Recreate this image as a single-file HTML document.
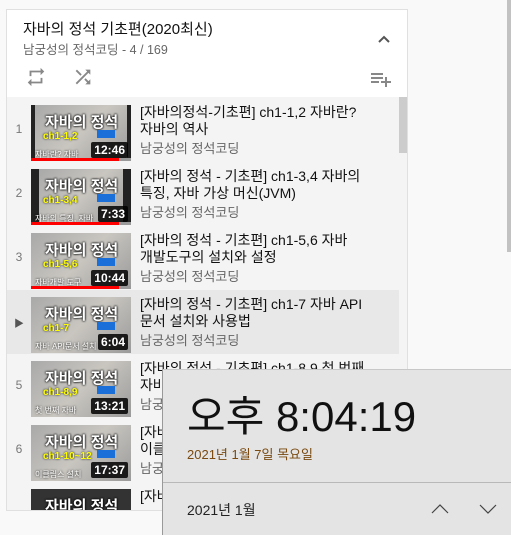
<!DOCTYPE html>
<html><head><meta charset="utf-8"><style>
*{margin:0;padding:0;box-sizing:border-box}
body{width:511px;height:535px;background:#f9f9f9;font-family:"Liberation Sans","Noto Sans CJK KR",sans-serif;position:relative;overflow:hidden}
#box{position:absolute;left:6px;top:9px;width:402px;height:502px;border:1px solid #e0e0e0;background:#f4f4f4;overflow:hidden}
#hdr{position:absolute;left:0;top:0;width:400px;height:87px;background:#fff}
.t1{position:absolute;left:16px;top:8px;font-size:15px;color:#111}
.t2{position:absolute;left:16px;top:29px;font-size:12.5px;color:#666}
.row{position:absolute;left:0;width:392px;height:64px}
.num{position:absolute;left:0;width:24px;text-align:center;top:24px;font-size:12px;color:#777}
.th{position:absolute;left:24px;top:7px;width:100px;height:56px;background:linear-gradient(135deg,#a9a9a9,#c9c6c0 50%,#9a9a9a);overflow:hidden}
.th .a{position:absolute;left:14px;top:6px;color:#fff;font-weight:bold;font-size:15px;text-shadow:0 0 2px #000,0 0 2px #000}
.th .b{position:absolute;left:12px;top:26px;color:#ff0;font-weight:bold;font-size:10px;text-shadow:0 0 2px #000}
.th .k{position:absolute;left:66px;top:25px;width:18px;height:8px;background:#1a6fd8}
.th .s{position:absolute;left:4px;top:44px;color:#fff;font-size:8px;text-shadow:0 0 2px #000}
.th .d{position:absolute;right:3px;bottom:3px;background:rgba(0,0,0,.85);color:#fff;font-weight:bold;font-size:12px;padding:1px 3px;border-radius:2px}
.th .p{position:absolute;left:0;bottom:0;height:3px;width:88px;background:#f00}
.th .p:after{content:"";position:absolute;left:88px;width:12px;height:3px;background:#999}
.ti{position:absolute;left:133px;top:6px;width:245px;font-size:14px;line-height:17px;color:#111;word-break:keep-all}
.ch{position:absolute;left:133px;top:40px;font-size:13px;color:#666}
#pop{position:absolute;left:162px;top:369px;width:349px;height:166px;background:#e4e4e4;border-left:1px solid #999;border-top:1px solid #c8c8c8}
</style></head><body>
<div style="position:absolute;right:0;top:0;width:4px;height:252px;background:#c2c2c2"></div>
<div id="box">
<div id="hdr">
<div class="t1">자바의 정석 기초편(2020최신)</div>
<div class="t2">남궁성의 정석코딩 - 4 / 169</div>
<svg style="position:absolute;left:370px;top:24px" width="14" height="10" viewBox="0 0 14 10"><path d="M2 8L7 3L12 8" stroke="#555" stroke-width="2" fill="none"/></svg>
<svg style="position:absolute;left:18px;top:56px" width="22" height="22" viewBox="0 0 24 24"><path fill="#888" d="M7 7h10v3l4-4-4-4v3H5v6h2V7zm10 10H7v-3l-4 4 4 4v-3h12v-6h-2v4z"/></svg>
<svg style="position:absolute;left:65px;top:56px" width="22" height="22" viewBox="0 0 24 24"><path fill="#888" d="M10.59 9.17L5.41 4 4 5.41l5.17 5.17 1.42-1.41zM14.5 4l2.04 2.04L4 18.59 5.41 20 17.96 7.46 20 9.5V4h-5.5zm.33 9.41l-1.41 1.41 3.13 3.13L14.5 20H20v-5.5l-2.04 2.04-3.13-3.13z"/></svg>
<svg style="position:absolute;left:362px;top:57px" width="24" height="24" viewBox="0 0 24 24"><path fill="#888" d="M14 10H2v2h12v-2zm0-4H2v2h12V6zm4 8v-4h-2v4h-4v2h4v4h2v-4h4v-2h-4zM2 16h8v-2H2v2z"/></svg>
</div>
<div style="position:absolute;left:392px;top:87px;width:8px;height:56px;background:#ccc"></div>

<div class="row" style="top:88px"><div class="num">1</div><div class="th" style="background:#222"><div style="position:absolute;left:0;right:0;top:0;bottom:0;margin:0 4px;background:linear-gradient(135deg,#a9a9a9,#c9c6c0 50%,#9a9a9a)"></div><div class="a">자바의 정석</div><div class="b">ch1-1,2</div><div class="k"></div><div class="s">자바란? 자바</div><div class="d">12:46</div><div class="p"></div></div><div class="ti">[자바의정석-기초편] ch1-1,2 자바란? 자바의 역사</div><div class="ch">남궁성의 정석코딩</div></div>
<div class="row" style="top:152px"><div class="num">2</div><div class="th" style="background:#222"><div style="position:absolute;left:0;right:0;top:0;bottom:0;margin:0 8px;background:linear-gradient(135deg,#a9a9a9,#c9c6c0 50%,#9a9a9a)"></div><div class="a">자바의 정석</div><div class="b">ch1-3,4</div><div class="k"></div><div class="s">자바의 특징, 자바</div><div class="d">7:33</div><div class="p" style="width:100px"></div></div><div class="ti">[자바의 정석 - 기초편] ch1-3,4 자바의 특징, 자바 가상 머신(JVM)</div><div class="ch">남궁성의 정석코딩</div></div>
<div class="row" style="top:216px"><div class="num">3</div><div class="th"><div class="a">자바의 정석</div><div class="b">ch1-5,6</div><div class="k"></div><div class="s">자바개발 도구</div><div class="d">10:44</div><div class="p" style="width:100px"></div></div><div class="ti">[자바의 정석 - 기초편] ch1-5,6 자바 개발도구의 설치와 설정</div><div class="ch">남궁성의 정석코딩</div></div>
<div class="row" style="top:280px;background:#e8e8e8"><div class="num" style="font-size:10px;color:#555;top:25px">▶</div><div class="th"><div class="a">자바의 정석</div><div class="b">ch1-7</div><div class="k"></div><div class="s">자바 API문서 설치</div><div class="d">6:04</div></div><div class="ti">[자바의 정석 - 기초편] ch1-7 자바 API 문서 설치와 사용법</div><div class="ch">남궁성의 정석코딩</div></div>
<div class="row" style="top:344px"><div class="num">5</div><div class="th"><div class="a">자바의 정석</div><div class="b">ch1-8,9</div><div class="k"></div><div class="s">첫 번째 자바</div><div class="d">13:21</div></div><div class="ti">[자바의 정석 - 기초편] ch1-8,9 첫 번째 자바 프로그램</div><div class="ch">남궁성의 정석코딩</div></div>
<div class="row" style="top:408px"><div class="num">6</div><div class="th"><div class="a">자바의 정석</div><div class="b">ch1-10~12</div><div class="k"></div><div class="s">이클립스 설치</div><div class="d">17:37</div></div><div class="ti">[자바의 정석 - 기초편] ch1-10~12 이클립스 설치</div><div class="ch">남궁성의 정석코딩</div></div>
<div class="row" style="top:472px"><div class="th" style="background:#333"><div class="a">자바의 정석</div></div><div class="ti">[자바의 정석 - 기초편] 이클립스</div></div>
</div>

<div id="pop">
<div style="position:absolute;left:24px;top:21px;font-size:42px;color:#111;line-height:52px">오후 8:04:19</div>
<div style="position:absolute;left:24px;top:74px;font-size:13px;color:#7a4a10">2021년 1월 7일 목요일</div>
<div style="position:absolute;left:0;right:0;top:112px;height:1px;background:#b8b8b8"></div>
<div style="position:absolute;left:24px;top:130px;font-size:14px;color:#222">2021년 1월</div>
<svg style="position:absolute;left:268px;top:134px" width="18" height="10" viewBox="0 0 18 10"><path d="M1 9L9 1L17 9" stroke="#444" stroke-width="1.2" fill="none"/></svg>
<svg style="position:absolute;left:316px;top:134px" width="18" height="10" viewBox="0 0 18 10"><path d="M1 1L9 9L17 1" stroke="#444" stroke-width="1.2" fill="none"/></svg>
</div>
</body></html>
